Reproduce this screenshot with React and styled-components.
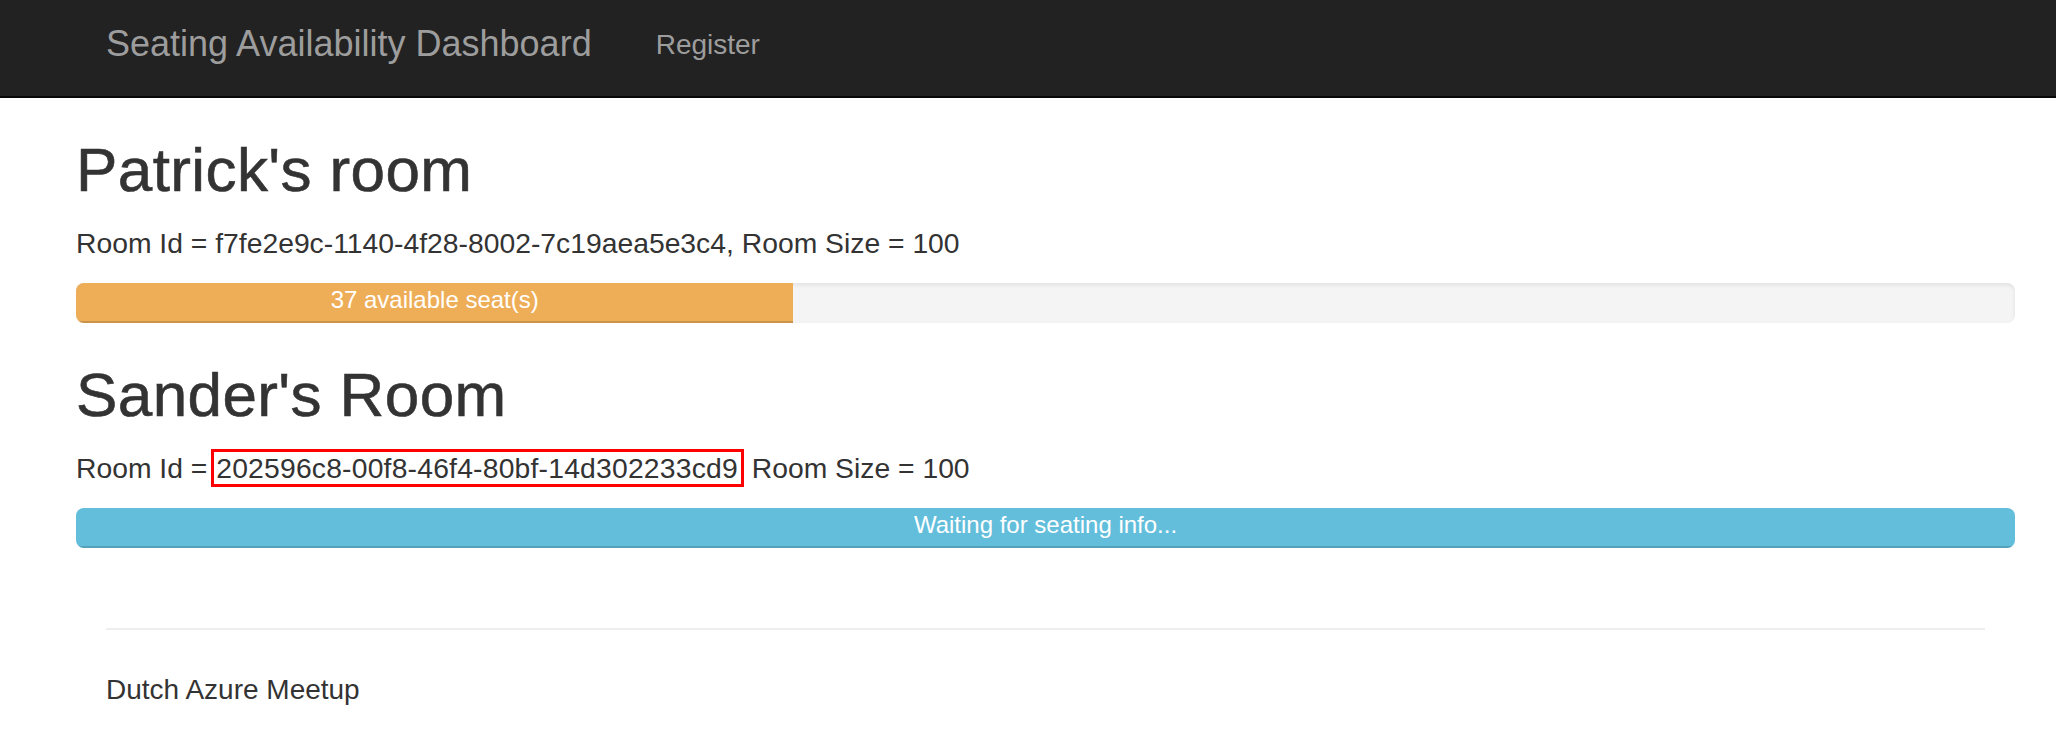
import styled, { createGlobalStyle } from "styled-components";

const GlobalStyle = createGlobalStyle`
    body{
        margin: 0;
        background: #ffffff;
        font-family: "Liberation Sans", Helvetica, Arial, sans-serif;
        color: #333333;
    }
`

const rooms = [
    {
        name: "Patrick's room",
        id: "f7fe2e9c-1140-4f28-8002-7c19aea5e3c4",
        size: 100,
        available: 37,
    },
    {
        name: "Sander's Room",
        id: "202596c8-00f8-46f4-80bf-14d302233cd9",
        size: 100,
        highlight: true,
    },
]

export default function App(){
    return (
        <>
            <GlobalStyle/>
            <Navbar>
                <Brand>Seating Availability Dashboard</Brand>
                <NavLink>Register</NavLink>
            </Navbar>
            <Main>
                {rooms.map((room) => (
                    <Room key={room.id}>
                        <Titulo>{room.name}</Titulo>
                        {room.highlight ? (
                            <Info>
                                Room Id = <Marcado>{room.id}</Marcado> Room Size = {room.size}
                            </Info>
                        ) : (
                            <Info>Room Id = {room.id}, Room Size = {room.size}</Info>
                        )}
                        <Trilho>
                            {room.available !== undefined ? (
                                <Barra cor="#eead57" style={{width: `${(room.available / room.size) * 100}%`}}>
                                    {room.available} available seat(s)
                                </Barra>
                            ) : (
                                <Barra cor="#62bedb" style={{width: "100%"}}>
                                    Waiting for seating info...
                                </Barra>
                            )}
                        </Trilho>
                    </Room>
                ))}
                <Rodape>
                    <Linha/>
                    <p>Dutch Azure Meetup</p>
                </Rodape>
            </Main>
        </>
    )
}

const Navbar=styled.nav`
    display: flex;
    align-items: flex-start;
    height: 72px;
    padding: 24px 0 0 106px;
    background: #222222;
    border-bottom: 2px solid #080808;
`

const Brand=styled.div`
    font-size: 36px;
    line-height: 40px;
    color: #9d9d9d;
    padding-right: 32px;
    white-space: nowrap;
`

const NavLink=styled.a`
    font-size: 28px;
    line-height: 40px;
    margin-top: 1px;
    padding-left: 32px;
    color: #9d9d9d;
    text-decoration: none;
`

const Main=styled.main`
    padding: 0 41px 0 76px;
`

const Room=styled.section`
    display: flex;
    flex-direction: column;
`

const Titulo=styled.h1`
    margin: 38px 0 0;
    font-size: 62px;
    line-height: 68px;
    font-weight: 500;
    letter-spacing: 0.4px;
    -webkit-text-stroke: 0.6px #333333;
    color: #333333;
`

const Info=styled.p`
    margin: 19px 0 20px;
    font-size: 28.3px;
    line-height: 40px;
    color: #333333;
`

const Marcado=styled.span`
    margin-left: -4px;
    padding: 0 3px 0 2px;
    border: 3px solid #ff0000;
    letter-spacing: 0.2px;
`

const Trilho=styled.div`
    display: flex;
    height: 40px;
    overflow: hidden;
    border-radius: 8px;
    background: #f4f4f4;
    box-shadow: inset 0 2px 4px rgba(0, 0, 0, 0.08);
`

const Barra=styled.div`
    height: 40px;
    background: ${props=>props.cor};
    box-shadow: inset 0 -2px 0 rgba(0, 0, 0, 0.15);
    color: #ffffff;
    font-size: 24px;
    line-height: 34px;
    text-align: center;
    white-space: nowrap;
`

const Rodape=styled.footer`
    padding: 80px 30px 0;
    p{
        margin: 40px 0 0;
        font-size: 28px;
        line-height: 40px;
        color: #333333;
    }
`

const Linha=styled.hr`
    margin: 0;
    border: 0;
    border-top: 2px solid #eeeeee;
`
